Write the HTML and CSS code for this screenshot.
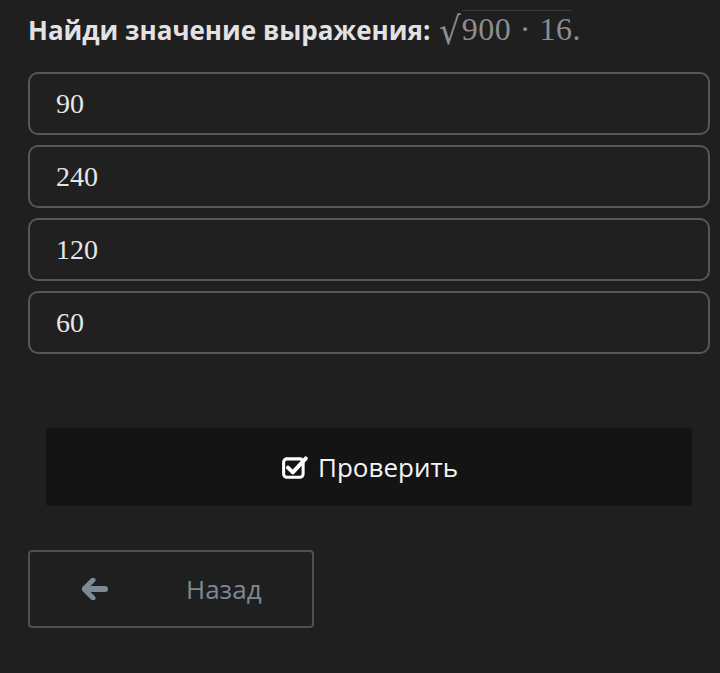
FILE: index.html
```html
<!DOCTYPE html>
<html lang="ru">
<head>
<meta charset="utf-8">
<link rel="stylesheet" href="styles.css">
</head>
<body>
<div class="page">
  <h1 class="question">Найди значение выражения: <span class="math"><span class="radical">√</span><span class="radicand">900 · 16</span>.</span></h1>
  <div class="options">
    <div class="option">90</div>
    <div class="option">240</div>
    <div class="option">120</div>
    <div class="option">60</div>
  </div>
  <div class="check-wrap">
    <button class="check">
      <svg class="check-icon" width="26" height="24" viewBox="0 0 24 22">
        <rect x="1.5" y="3.5" width="18" height="17" rx="3" fill="none" stroke="#fff" stroke-width="2.8"/>
        <path d="M5.5 11.5 L10 16 L22 3" fill="none" stroke="#fff" stroke-width="3.6" stroke-linecap="round" stroke-linejoin="round"/>
      </svg>
      <span>Проверить</span>
    </button>
  </div>
  <button class="back">
    <svg class="back-icon" width="26" height="22" viewBox="0 0 26 22">
      <path d="M11 2 L2 11 L11 20" fill="none" stroke="#7d8b98" stroke-width="5" stroke-linecap="round" stroke-linejoin="round"/>
      <path d="M4 11 H23" fill="none" stroke="#7d8b98" stroke-width="6" stroke-linecap="round"/>
    </svg>
    <span class="back-label">Назад</span>
  </button>
</div>
</body>
</html>
```
FILE: styles.css
```css
html, body {
  margin: 0;
  padding: 0;
  background: #1f1f1f;
}
.page {
  padding: 8px 10px 0 28px;
  font-family: "Open Sans", "Noto Sans", sans-serif;
}
.question {
  margin: 0;
  font-size: 26px;
  font-weight: 700;
  color: #e2e2e4;
  line-height: 40px;
  height: 42px;
  white-space: nowrap;
}
.math {
  font-family: "Liberation Serif", serif;
  font-weight: 400;
  font-size: 32px;
  color: #8d8d8f;
  margin-left: 2px;
}
.radical {
  font-family: "DejaVu Serif", serif;
  font-size: 34px;
  display: inline-block;
  transform: scaleY(1.12) translateY(2px);
  margin-right: 1px;
}
.radicand {
  border-top: 1px solid #3a3a3a;
  letter-spacing: 0.5px;
}
.options {
  display: flex;
  flex-direction: column;
  gap: 10px;
  margin-top: 22px;
}
.option {
  box-sizing: border-box;
  height: 63px;
  border: 2px solid #55575a;
  border-radius: 10px;
  background: #202020;
  padding-left: 26px;
  display: flex;
  align-items: center;
  font-family: "Liberation Serif", serif;
  font-size: 28px;
  color: #e6e6e8;
}
.check-wrap {
  padding: 74px 18px 0 18px;
}
.check {
  width: 100%;
  height: 78px;
  background: #141414;
  border: none;
  border-radius: 3px;
  display: flex;
  align-items: center;
  justify-content: center;
  gap: 10px;
  color: #f5f5f5;
  font-family: "Open Sans", "Noto Sans", sans-serif;
  font-size: 26px;
  padding: 0 0 0 2px;
}
.check-icon {
  display: block;
}
.back {
  margin-top: 44px;
  width: 286px;
  height: 78px;
  box-sizing: border-box;
  border: 2px solid #4a5058;
  border-radius: 4px;
  background: #1f1f1f;
  display: flex;
  align-items: center;
  padding: 0 0 0 52px;
  font-family: "Open Sans", "Noto Sans", sans-serif;
  font-size: 26px;
  color: #7d8894;
}
.back-icon {
  display: block;
}
.back-label {
  margin-left: 78px;
}
```
